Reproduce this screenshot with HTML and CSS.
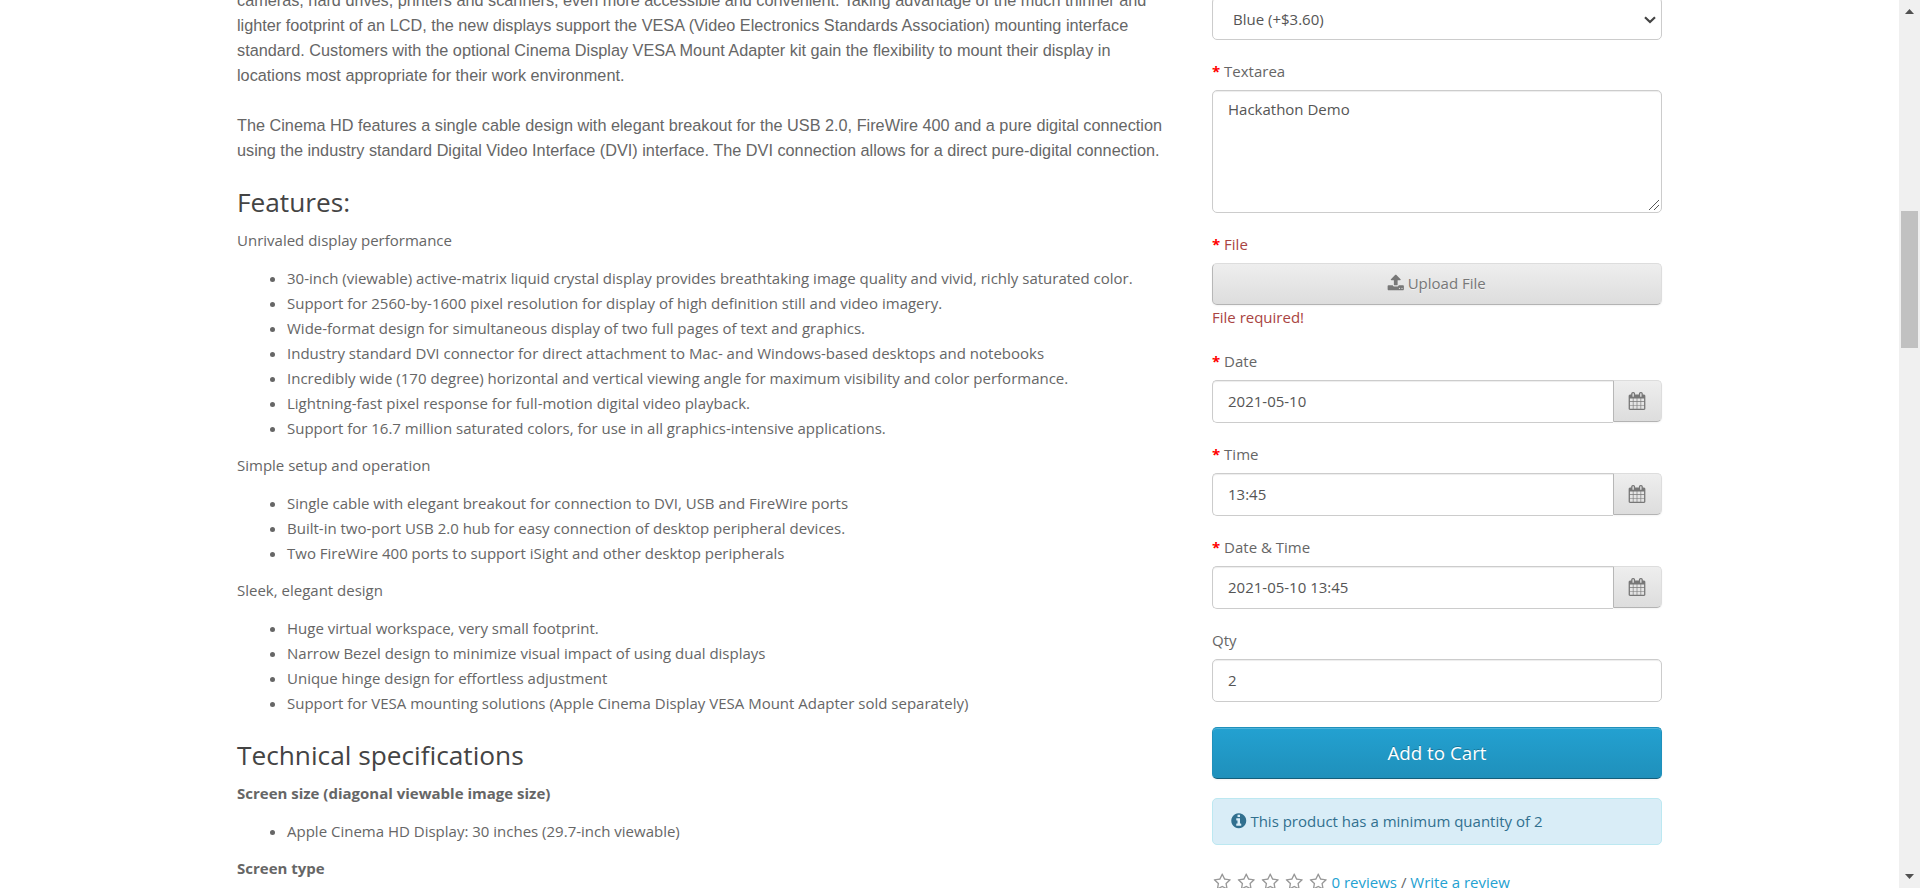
FILE: index.html
```html
<!DOCTYPE html>
<html lang="en">
<head>
<meta charset="utf-8">
<title>Apple Cinema 30"</title>
<link rel="stylesheet" href="styles.css">
</head>
<body>
<svg class="defs" width="0" height="0">
  <symbol id="upload" viewBox="0 0 1792 1792"><path d="M1344 1472q0-26-19-45t-45-19-45 19-19 45 19 45 45 19 45-19 19-45zm256 0q0-26-19-45t-45-19-45 19-19 45 19 45 45 19 45-19 19-45zm128-224v320q0 40-28 68t-68 28h-1472q-40 0-68-28t-28-68v-320q0-40 28-68t68-28h427q21 56 70.500 92t110.500 36h256q61 0 110.500-36t70.500-92h427q40 0 68 28t28 68zm-325-648q-17 40-59 40h-256v448q0 26-19 45t-45 19h-256q-26 0-45-19t-19-45v-448h-256q-42 0-59-40-17-39 14-69l448-448q18-19 45-19t45 19l448 448q31 30 14 69z"/></symbol>
  <symbol id="calendar" viewBox="0 0 1792 1792"><path d="M192 1664h288v-288h-288v288zm352 0h320v-288h-320v288zm-352-352h288v-320h-288v320zm352 0h320v-320h-320v320zm-352-384h288v-288h-288v288zm736 736h320v-288h-320v288zm-384-736h320v-288h-320v288zm768 736h288v-288h-288v288zm-384-352h320v-320h-320v320zm-352-864v-288q0-13-9.500-22.500t-22.500-9.500h-64q-13 0-22.500 9.500t-9.500 22.500v288q0 13 9.500 22.500t22.500 9.500h64q13 0 22.500-9.500t9.500-22.500zm736 864h288v-320h-288v320zm-384-384h320v-288h-320v288zm384 0h288v-288h-288v288zm32-480v-288q0-13-9.500-22.500t-22.500-9.500h-64q-13 0-22.500 9.500t-9.500 22.500v288q0 13 9.500 22.500t22.500 9.500h64q13 0 22.500-9.500t9.500-22.500zm384-64v1280q0 52-38 90t-90 38h-1408q-52 0-90-38t-38-90v-1280q0-52 38-90t90-38h128v-96q0-66 47-113t113-47h64q66 0 113 47t47 113v96h384v-96q0-66 47-113t113-47h64q66 0 113 47t47 113v96h128q52 0 90 38t38 90z"/></symbol>
  <symbol id="info" viewBox="0 0 1792 1792"><path d="M1152 1376v-160q0-14-9-23t-23-9h-96v-512q0-14-9-23t-23-9h-320q-14 0-23 9t-9 23v160q0 14 9 23t23 9h96v320h-96q-14 0-23 9t-9 23v160q0 14 9 23t23 9h448q14 0 23-9t9-23zm-128-896v-160q0-14-9-23t-23-9h-192q-14 0-23 9t-9 23v160q0 14 9 23t23 9h192q14 0 23-9t9-23zm640 416q0 209-103 385.500t-279.500 279.500-385.500 103-385.500-103-279.500-279.500-103-385.500 103-385.500 279.500-279.500 385.500-103 385.500 103 279.500 279.500 103 385.500z"/></symbol>
  <symbol id="star" viewBox="0 0 1792 1792"><path d="M1201 1004l306-297-422-62-189-382-189 382-422 62 306 297-73 421 378-199 377 199zm527-357q0 22-26 48l-363 354 86 500q1 7 1 20 0 50-41 50-19 0-40-12l-449-236-449 236q-22 12-40 12-21 0-31.500-14.500t-10.500-35.500q0-6 2-20l86-500-364-354q-25-27-25-48 0-37 56-46l502-73 225-455q19-41 49-41t49 41l225 455 502 73q56 9 56 46z"/></symbol>
</svg>
<div class="page">
  <main class="container">
    <section class="description">
      <p class="intro">cameras, hard drives, printers and scanners, even more accessible and convenient. Taking advantage of the much thinner and<br>lighter footprint of an LCD, the new displays support the VESA (Video Electronics Standards Association) mounting interface<br>standard. Customers with the optional Cinema Display VESA Mount Adapter kit gain the flexibility to mount their display in<br>locations most appropriate for their work environment.<br><br>The Cinema HD features a single cable design with elegant breakout for the USB 2.0, FireWire 400 and a pure digital connection<br>using the industry standard Digital Video Interface (DVI) interface. The DVI connection allows for a direct pure-digital connection.</p>
      <h3>Features:</h3>
      <p>Unrivaled display performance</p>
      <ul>
        <li>30-inch (viewable) active-matrix liquid crystal display provides breathtaking image quality and vivid, richly saturated color.</li>
        <li>Support for 2560-by-1600 pixel resolution for display of high definition still and video imagery.</li>
        <li>Wide-format design for simultaneous display of two full pages of text and graphics.</li>
        <li>Industry standard DVI connector for direct attachment to Mac- and Windows-based desktops and notebooks</li>
        <li>Incredibly wide (170 degree) horizontal and vertical viewing angle for maximum visibility and color performance.</li>
        <li>Lightning-fast pixel response for full-motion digital video playback.</li>
        <li>Support for 16.7 million saturated colors, for use in all graphics-intensive applications.</li>
      </ul>
      <p>Simple setup and operation</p>
      <ul>
        <li>Single cable with elegant breakout for connection to DVI, USB and FireWire ports</li>
        <li>Built-in two-port USB 2.0 hub for easy connection of desktop peripheral devices.</li>
        <li>Two FireWire 400 ports to support iSight and other desktop peripherals</li>
      </ul>
      <p>Sleek, elegant design</p>
      <ul>
        <li>Huge virtual workspace, very small footprint.</li>
        <li>Narrow Bezel design to minimize visual impact of using dual displays</li>
        <li>Unique hinge design for effortless adjustment</li>
        <li>Support for VESA mounting solutions (Apple Cinema Display VESA Mount Adapter sold separately)</li>
      </ul>
      <h3>Technical specifications</h3>
      <p><b>Screen size (diagonal viewable image size)</b></p>
      <ul>
        <li>Apple Cinema HD Display: 30 inches (29.7-inch viewable)</li>
      </ul>
      <p><b>Screen type</b></p>
    </section>
    <aside class="options">
      <div class="group">
        <div class="control select">Blue (+$3.60)
          <svg class="chevron" viewBox="0 0 12 8"><path d="M1 1.200 6 6 11 1.200"/></svg>
        </div>
      </div>
      <div class="group">
        <label class="required">Textarea</label>
        <div class="control area">Hackathon Demo
          <svg class="grip" viewBox="0 0 10 10"><path d="M0 10 10 0M5 10 10 5"/></svg>
        </div>
      </div>
      <div class="group upload">
        <label class="required error">File</label>
        <button class="btn"><svg class="icon"><use href="#upload"/></svg> Upload File</button>
        <div class="error message">File required!</div>
      </div>
      <div class="group">
        <label class="required">Date</label>
        <div class="picker"><div class="control">2021-05-10</div><button class="btn"><svg class="icon"><use href="#calendar"/></svg></button></div>
      </div>
      <div class="group">
        <label class="required">Time</label>
        <div class="picker"><div class="control">13:45</div><button class="btn"><svg class="icon"><use href="#calendar"/></svg></button></div>
      </div>
      <div class="group">
        <label class="required">Date &amp; Time</label>
        <div class="picker"><div class="control">2021-05-10 13:45</div><button class="btn"><svg class="icon"><use href="#calendar"/></svg></button></div>
      </div>
      <div class="group quantity">
        <label>Qty</label>
        <div class="control">2</div>
      </div>
      <button class="cart">Add to Cart</button>
      <div class="alert"><svg class="icon"><use href="#info"/></svg> This product has a minimum quantity of 2</div>
      <div class="rating">
        <span class="stars"><svg class="icon"><use href="#star"/></svg><svg class="icon"><use href="#star"/></svg><svg class="icon"><use href="#star"/></svg><svg class="icon"><use href="#star"/></svg><svg class="icon"><use href="#star"/></svg></span>
        <span><a>0 reviews</a> / <a>Write a review</a></span>
      </div>
    </aside>
  </main>
  <div class="scrollbar">
    <svg class="arrow" viewBox="0 0 9 5"><path d="M0 5 4.500 0 9 5z"/></svg>
    <div class="thumb"></div>
    <svg class="arrow" viewBox="0 0 9 5"><path d="M0 0 4.500 5 9 0z"/></svg>
  </div>
</div>
</body>
</html>
```
FILE: styles.css
```css
* { box-sizing: border-box; }
html, body { height: 100%; }
body {
  margin: 0;
  overflow: hidden;
  background: #fff;
  color: #666;
  font: 400 15px/25px "Open Sans", sans-serif;
}
.defs { display: block; }
.page { display: flex; height: 888px; overflow: hidden; }
.container { flex: 1; display: flex; align-items: flex-start; padding-left: 237px; }

.description { width: 938px; margin-top: -12px; flex: none; }
.description p { margin: 0 0 12.5px; }
.description .intro {
  margin: 0;
  font: 16.25px/25px "Liberation Sans", Arial, sans-serif;
  white-space: nowrap;
}
h3 {
  margin: 25px 0 11.4px;
  color: #444;
  font-size: 26.25px;
  font-weight: 400;
  line-height: 28.875px;
}
ul { margin: 0 0 12.5px; padding-left: 50px; }

.options { width: 450px; margin: -3px 0 0 37px; flex: none; }
.group { margin-bottom: 19px; }
label { display: block; height: 31px; }
.required::before { content: "* "; color: #f00; font-weight: 700; }
.error { color: #a94442; }
.control {
  position: relative;
  height: 43px;
  padding: 8px 15px;
  border: 1px solid #ccc;
  border-radius: 5px;
  background: #fff;
  box-shadow: inset 0 1px 1px rgba(0, 0, 0, .075);
  color: #555;
}
.select { padding: 9px 20px; }
.chevron { position: absolute; right: 5px; top: 18px; width: 12px; height: 8px; fill: none; stroke: #444; stroke-width: 2.2; }
.area { height: 123px; padding-top: 6px; }
.grip { position: absolute; right: 2px; bottom: 2px; width: 10px; height: 10px; stroke: #555; stroke-width: 1; }
.icon { width: 17.5px; height: 17.5px; fill: currentColor; vertical-align: -2px; }

.btn {
  height: 42px;
  padding: 0;
  border: 1px solid #ddd;
  border-color: #ddd #ddd #b3b3b3 #b7b7b7;
  border-radius: 5px;
  background: linear-gradient(#eee, #ddd);
  box-shadow: 0 1px 2px rgba(0, 0, 0, .05);
  color: #777;
  font: inherit;
  text-shadow: 0 1px 0 rgba(255, 255, 255, .5);
}
.upload { margin-bottom: 20px; }
.upload .btn { display: block; width: 100%; padding-bottom: 2px; }
.upload .icon { margin: 0 -1px 0 -1px; vertical-align: -2.5px; }
.message { height: 24px; }
.picker { display: flex; }
.picker .control { width: 401px; border-right: 0; border-radius: 5px 0 0 5px; }
.picker .btn { width: 49px; padding-right: 1px; border-radius: 0 5px 5px 0; }
.picker .icon { display: block; width: 18px; height: 18px; margin: 0 auto; }

.quantity { margin-bottom: 25px; }
.cart {
  display: block;
  width: 100%;
  height: 52px;
  padding: 0 0 2px;
  border: 1px solid #1f90bb;
  border-bottom-color: #145e7a;
  border-radius: 5px;
  background: linear-gradient(#23a1d1, #1f90bb);
  box-shadow: inset 0 1px 0 rgba(255, 255, 255, .2), 0 1px 2px rgba(0, 0, 0, .05);
  color: #fff;
  font: 18.75px/25px "Open Sans", sans-serif;
  text-shadow: 0 -1px 0 rgba(0, 0, 0, .25);
}
.alert {
  height: 47px;
  margin: 19px 0 25px;
  padding: 10px 17px;
  border: 1px solid #bce8f1;
  border-radius: 5px;
  background: #d9edf7;
  color: #31708f;
}
.alert .icon { margin-right: -1px; }
.rating { display: flex; gap: 0; white-space: nowrap; }
.stars { display: flex; width: 119.5px; color: #999; }
.stars .icon { width: 18.5px; height: 18.5px; margin: 3px 4.5px 0 1px; flex: none; }
a { color: #23a1d1; }

.scrollbar {
  width: 21px;
  height: 888px;
  padding: 9px 2px;
  display: flex;
  flex-direction: column;
  align-items: center;
  background: #f0f0f0;
}
.arrow { display: block; width: 9px; height: 5px; fill: #505050; }
.thumb { width: 17px; height: 137px; margin: 197px 0 auto; background: #c1c1c1; }
```
